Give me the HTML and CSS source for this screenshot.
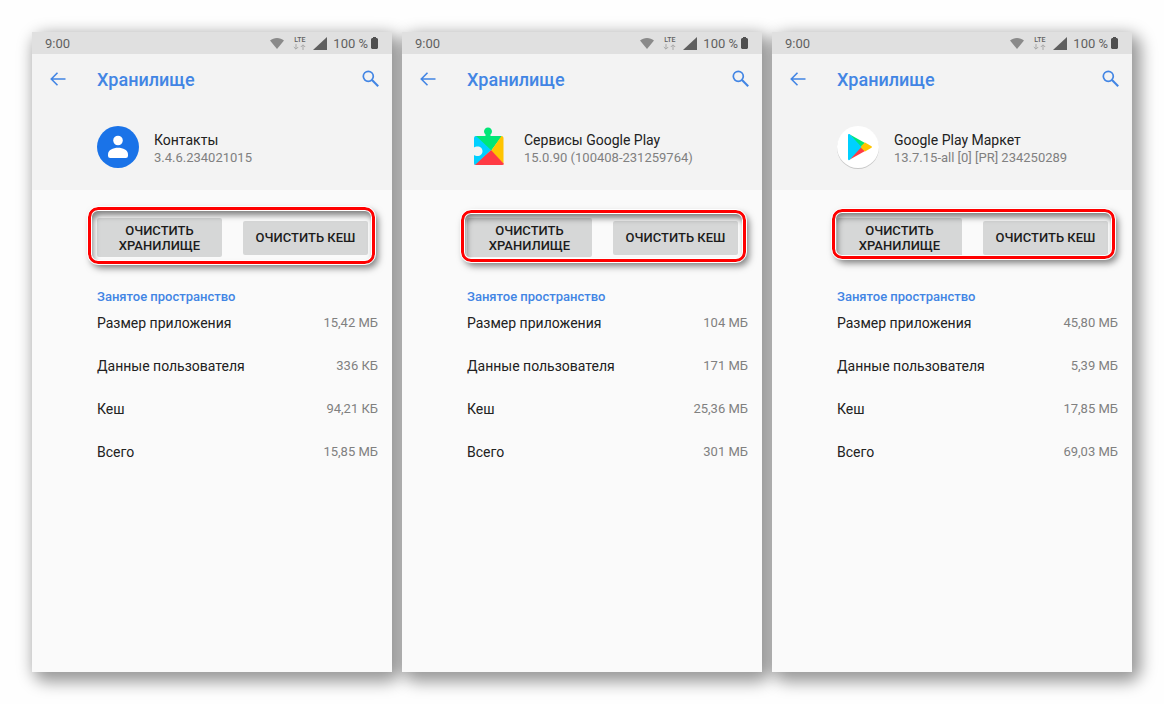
FILE: index.html
```html
<!DOCTYPE html>
<html lang="ru">
<head>
    <meta charset="UTF-8">
    <meta name="viewport" content="width=device-width, initial-scale=1.0">
    <title>Хранилище</title>
    <link rel="stylesheet" href="styles.css">
</head>
<body>
    <!-- Shared icons -->
    <svg class="sprite" aria-hidden="true">
        <symbol id="wifi" viewBox="0 0 14 11"><path d="M0 2.6C2 .9 4.4 0 7 0s5 .9 7 2.6L7 11z"/></symbol>
        <symbol id="arrows" viewBox="0 0 13 6"><path d="M3 0v5M.8 3 3 5.2 5.2 3M10 6V1M7.8 3 10 .8 12.2 3" fill="none" stroke="currentColor"/></symbol>
        <symbol id="signal" viewBox="0 0 14 13"><path d="M14 0v13H0z"/></symbol>
        <symbol id="battery" viewBox="0 0 7 12"><path d="M2 0h3v1h1l1 1v9l-1 1H1l-1-1V2l1-1h1z"/></symbol>
        <symbol id="back" viewBox="0 0 16 14"><path d="M15.5 7H1.5M7.5 .8 1.3 7l6.2 6.2" fill="none" stroke="currentColor" stroke-width="1.6"/></symbol>
        <symbol id="search" viewBox="0 0 17 17"><g fill="none" stroke="currentColor"><circle cx="6.3" cy="6.3" r="5" stroke-width="1.7"/><path d="m10 10 6.2 6.2" stroke-width="2.1"/></g></symbol>
    </svg>

    <main class="phones">
        <section class="phone">
            <div class="status-bar">
                <span class="time">9:00</span>
                <svg class="wifi"><use href="#wifi"/></svg>
                <span class="lte">LTE<svg class="arrows"><use href="#arrows"/></svg></span>
                <svg class="signal"><use href="#signal"/></svg>
                <span class="percent">100 %</span>
                <svg class="battery"><use href="#battery"/></svg>
            </div>
            <header class="header">
                <div class="toolbar">
                    <button class="icon-btn back" aria-label="Назад"><svg><use href="#back"/></svg></button>
                    <h1>Хранилище</h1>
                    <button class="icon-btn search" aria-label="Поиск"><svg><use href="#search"/></svg></button>
                </div>
                <div class="app">
                    <svg class="app-icon" viewBox="0 0 42 42">
                        <circle cx="21" cy="21" r="21" fill="#1a73e8"/>
                        <circle cx="21" cy="14.5" r="4.8" fill="#fff"/>
                        <path d="M11 28.5c0-4.6 5-6.7 10-6.7s10 2.1 10 6.7v1.3q0 2.2-2.2 2.2H13.2Q11 32 11 29.8z" fill="#fff"/>
                    </svg>
                    <div class="app-info">
                        <h2>Контакты</h2>
                        <p>3.4.6.234021015</p>
                    </div>
                </div>
            </header>
            <div class="actions">
                <button class="btn btn-storage">Очистить хранилище</button>
                <button class="btn btn-cache">Очистить кеш</button>
                <div class="highlight highlight-contacts"></div>
            </div>
            <table class="usage">
                <caption>Занятое пространство</caption>
                <tr><th scope="row">Размер приложения</th><td>15,42 МБ</td></tr>
                <tr><th scope="row">Данные пользователя</th><td>336 КБ</td></tr>
                <tr><th scope="row">Кеш</th><td>94,21 КБ</td></tr>
                <tr><th scope="row">Всего</th><td>15,85 МБ</td></tr>
            </table>
        </section>

        <section class="phone">
            <div class="status-bar">
                <span class="time">9:00</span>
                <svg class="wifi"><use href="#wifi"/></svg>
                <span class="lte">LTE<svg class="arrows"><use href="#arrows"/></svg></span>
                <svg class="signal"><use href="#signal"/></svg>
                <span class="percent">100 %</span>
                <svg class="battery"><use href="#battery"/></svg>
            </div>
            <header class="header">
                <div class="toolbar">
                    <button class="icon-btn back" aria-label="Назад"><svg><use href="#back"/></svg></button>
                    <h1>Хранилище</h1>
                    <button class="icon-btn search" aria-label="Поиск"><svg><use href="#search"/></svg></button>
                </div>
                <div class="app">
                    <svg class="app-icon" viewBox="0 0 42 42">
                        <path d="M8 10h27L24 25z" fill="#00e676"/>
                        <path d="M18.5 11V8.5a4 4 0 1 1 5 0V11z" fill="#00e676"/>
                        <path d="M34.5 10q2 0 2 2v26L24 25z" fill="#ffc400"/>
                        <path d="M24 24 37 38q-.5 1-2 1H9q-1.5 0-1.5-.8z" fill="#ff3a44"/>
                        <path d="M9 10 24 24 8 39q-1-.5-1-2v-8c1 .8 2.2 1 3.5 1 3 0 5-2.2 5-4.8s-2-4.7-5-4.7c-1.3 0-2.5.2-3.5 1V12q0-2 2-2z" fill="#00d0ff"/>
                    </svg>
                    <div class="app-info">
                        <h2>Сервисы Google Play</h2>
                        <p>15.0.90 (100408-231259764)</p>
                    </div>
                </div>
            </header>
            <div class="actions">
                <button class="btn btn-storage">Очистить хранилище</button>
                <button class="btn btn-cache">Очистить кеш</button>
                <div class="highlight highlight-services"></div>
            </div>
            <table class="usage">
                <caption>Занятое пространство</caption>
                <tr><th scope="row">Размер приложения</th><td>104 МБ</td></tr>
                <tr><th scope="row">Данные пользователя</th><td>171 МБ</td></tr>
                <tr><th scope="row">Кеш</th><td>25,36 МБ</td></tr>
                <tr><th scope="row">Всего</th><td>301 МБ</td></tr>
            </table>
        </section>

        <section class="phone">
            <div class="status-bar">
                <span class="time">9:00</span>
                <svg class="wifi"><use href="#wifi"/></svg>
                <span class="lte">LTE<svg class="arrows"><use href="#arrows"/></svg></span>
                <svg class="signal"><use href="#signal"/></svg>
                <span class="percent">100 %</span>
                <svg class="battery"><use href="#battery"/></svg>
            </div>
            <header class="header">
                <div class="toolbar">
                    <button class="icon-btn back" aria-label="Назад"><svg><use href="#back"/></svg></button>
                    <h1>Хранилище</h1>
                    <button class="icon-btn search" aria-label="Поиск"><svg><use href="#search"/></svg></button>
                </div>
                <div class="app">
                    <svg class="app-icon" viewBox="0 0 42 42">
                        <circle cx="21" cy="22" r="21" fill="#c8c8c8"/>
                        <circle cx="21" cy="21" r="21" fill="#fff"/>
                        <path d="M12 8 28 17l-4 5z" fill="#00e676"/>
                        <path d="m12 34 16-9-4-5z" fill="#ff3a44"/>
                        <path d="m28 16.5 6.5 3.7q1 .8 0 1.6L28 25.5 23 21z" fill="#ffc400"/>
                        <path d="M11 9q0-1.5 1.5-1L24.5 21l-12 13q-1.5.5-1.5-1z" fill="#00d0ff"/>
                    </svg>
                    <div class="app-info">
                        <h2>Google Play Маркет</h2>
                        <p>13.7.15-all [0] [PR] 234250289</p>
                    </div>
                </div>
            </header>
            <div class="actions">
                <button class="btn btn-storage">Очистить хранилище</button>
                <button class="btn btn-cache">Очистить кеш</button>
                <div class="highlight highlight-market"></div>
            </div>
            <table class="usage">
                <caption>Занятое пространство</caption>
                <tr><th scope="row">Размер приложения</th><td>45,80 МБ</td></tr>
                <tr><th scope="row">Данные пользователя</th><td>5,39 МБ</td></tr>
                <tr><th scope="row">Кеш</th><td>17,85 МБ</td></tr>
                <tr><th scope="row">Всего</th><td>69,03 МБ</td></tr>
            </table>
        </section>
    </main>
</body>
</html>
```
FILE: styles.css
```css
* {
    box-sizing: border-box;
}
body {
    margin: 0;
    background: #fefefe;
    font-family: Roboto, "Noto Sans", sans-serif;
    color: #212121;
}
h1, h2, p {
    margin: 0;
    font-weight: 400;
}
button {
    border: none;
    padding: 0;
    font-family: inherit;
    cursor: pointer;
}
.sprite {
    display: none;
}
.phones {
    display: flex;
    gap: 10px;
    min-height: 100vh;
    padding: 32px;
    isolation: isolate;
}
.phone {
    position: relative;
    flex: 1;
    min-width: 0;
    background: #fafafa;
}
/* shadow sits below all three screens */
.phone::before {
    content: "";
    position: absolute;
    inset: 0;
    z-index: -1;
    border-radius: 10px;
    box-shadow: 5px 6px 16px 4px rgba(0, 0, 0, 0.4);
}

/* Status bar */
.status-bar {
    display: flex;
    align-items: center;
    height: 22px;
    padding: 0 14px 0 13px;
    background: #e0e0e0;
    color: #606060;
    font-size: 13px;
    fill: #606060;
}
.time {
    margin-right: auto;
}
.wifi {
    width: 14px;
    height: 11px;
    fill: #8a8a8a;
}
.lte {
    display: flex;
    flex-direction: column;
    align-items: center;
    margin: 0 7px 0 9px;
    font-size: 7px;
    font-weight: 500;
    line-height: 8px;
}
.arrows {
    width: 13px;
    height: 6px;
    color: #a8a8a8;
}
.signal {
    width: 14px;
    height: 13px;
}
.percent {
    margin: 0 3px 0 6px;
}
.battery {
    width: 7px;
    height: 12px;
    fill: #505050;
}

/* Header */
.header {
    height: 136px;
    background: #f3f3f3;
}
.toolbar {
    display: flex;
    align-items: center;
    height: 50px;
    padding: 0 13px 0 18px;
    color: #4285e4;
}
.toolbar h1 {
    flex: 1;
    margin-left: 31px;
    padding-top: 2px;
    font-size: 18px;
    font-weight: 500;
    line-height: 24px;
}
.icon-btn {
    display: flex;
    background: none;
    color: inherit;
}
.back svg {
    width: 16px;
    height: 14px;
}
.search {
    padding-bottom: 2px;
}
.search svg {
    width: 17px;
    height: 17px;
}
.app {
    display: flex;
    align-items: center;
    gap: 15px;
    margin-top: 22px;
    padding-left: 65px;
}
.app-icon {
    width: 42px;
    height: 42px;
    overflow: visible;
}
.app-info {
    padding-top: 3px;
    white-space: nowrap;
}
.app-info h2 {
    font-size: 14px;
    line-height: 18px;
}
.app-info p {
    color: #808080;
    font-size: 13px;
    line-height: 18px;
}

/* Buttons */
.actions {
    position: relative;
    display: flex;
    align-items: center;
    gap: 21px;
    margin-top: 28px;
    padding: 0 24px 0 65px;
}
.btn {
    flex: 1;
    background: #d6d7d7;
    border-radius: 2px;
    color: #1c1c1c;
    font-size: 13px;
    font-weight: 500;
    line-height: 15px;
    text-transform: uppercase;
}
.btn-storage {
    min-height: 39px;
}
.btn-cache {
    min-height: 34px;
}
.highlight {
    position: absolute;
    border: 3px solid #f00;
    border-radius: 10px;
    outline: 1px solid #fff;
    box-shadow: 3px 4px 7px rgba(0, 0, 0, 0.5),
        inset 0 0 0 1px #fff,
        inset 2px 5px 6px rgba(0, 0, 0, 0.5);
    pointer-events: none;
}
.highlight-contacts {
    inset: -11px 17px -7px 56px;
}
.highlight-services {
    inset: -8px 16px -5px 59px;
}
.highlight-market {
    inset: -9px 17px -2px 60px;
}

/* Usage table */
.usage {
    width: 100%;
    margin-top: 31px;
    border-collapse: collapse;
}
.usage caption {
    padding-left: 65px;
    color: #4285e4;
    font-size: 13px;
    font-weight: 500;
    line-height: 18px;
    text-align: left;
}
.usage th,
.usage td {
    height: 43px;
    padding: 0 14px 9px 0;
    line-height: 34px;
    vertical-align: top;
}
.usage th {
    padding-left: 65px;
    padding-right: 0;
    font-size: 14px;
    font-weight: 400;
    text-align: left;
    white-space: nowrap;
}
.usage td {
    color: #808080;
    font-size: 13px;
    text-align: right;
}
```
